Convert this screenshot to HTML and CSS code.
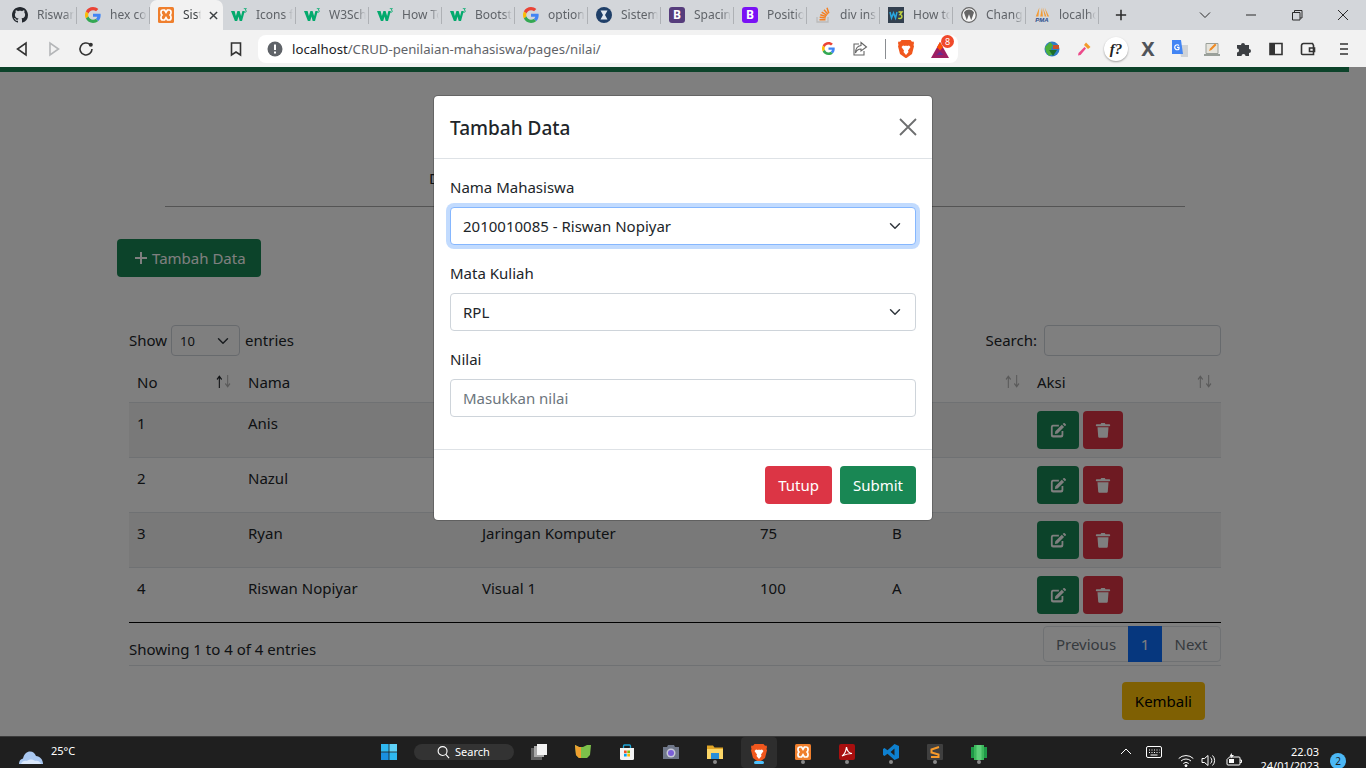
FILE: index.html
```html
<!DOCTYPE html>
<html>
<head>
  <title>Sistem Penilaian Mahasiswa</title>
  <meta charset="UTF-8">
  <meta name="viewport" content="width=device-width, initial-scale=1.0">
  <link rel="stylesheet" href="styles.css">
</head>
<body>
  <svg class="defs" width="0" height="0">
    <symbol id="i-github" viewBox="0 0 16 16"><path fill="#24292f" d="M8 0C3.58 0 0 3.58 0 8c0 3.54 2.29 6.53 5.47 7.59.4.07.55-.17.55-.38 0-.19-.01-.82-.01-1.49-2.01.37-2.53-.49-2.69-.94-.09-.23-.48-.94-.82-1.13-.28-.15-.68-.52-.01-.53.63-.01 1.08.58 1.23.82.72 1.21 1.87.87 2.33.66.07-.52.28-.87.51-1.07-1.78-.2-3.64-.89-3.64-3.95 0-.87.31-1.59.82-2.15-.08-.2-.36-1.02.08-2.12 0 0 .67-.21 2.2.82.64-.18 1.32-.27 2-.27.68 0 1.36.09 2 .27 1.53-1.04 2.2-.82 2.2-.82.44 1.1.16 1.92.08 2.12.51.56.82 1.27.82 2.15 0 3.07-1.87 3.75-3.65 3.95.29.25.54.73.54 1.48 0 1.07-.01 1.93-.01 2.2 0 .21.15.46.55.38A8.013 8.013 0 0016 8c0-4.42-3.58-8-8-8z"/></symbol>
    <symbol id="i-google" viewBox="0 0 48 48">
      <path fill="#EA4335" d="M24 9.5c3.54 0 6.71 1.22 9.21 3.6l6.85-6.85C35.9 2.38 30.47 0 24 0 14.62 0 6.51 5.38 2.56 13.22l7.98 6.19C12.43 13.72 17.74 9.5 24 9.5z"/>
      <path fill="#4285F4" d="M46.98 24.55c0-1.57-.15-3.09-.38-4.55H24v9.02h12.94c-.58 2.96-2.26 5.48-4.78 7.18l7.73 6c4.51-4.18 7.09-10.36 7.09-17.65z"/>
      <path fill="#FBBC05" d="M10.53 28.59c-.48-1.45-.76-2.99-.76-4.59s.27-3.14.76-4.59l-7.98-6.19C.92 16.46 0 20.12 0 24c0 3.88.92 7.54 2.56 10.78l7.97-6.19z"/>
      <path fill="#34A853" d="M24 48c6.48 0 11.93-2.13 15.89-5.81l-7.73-6c-2.15 1.45-4.92 2.3-8.16 2.3-6.26 0-11.57-4.22-13.47-9.91l-7.98 6.19C6.51 42.62 14.62 48 24 48z"/>
    </symbol>
    <symbol id="i-xampp" viewBox="0 0 16 16">
      <rect width="16" height="16" rx="1.5" fill="#ef7f2d"/>
      <path fill="none" stroke="#fff" stroke-width="1.7" d="M5 3h1.6L8 5.4 9.4 3H11a2 2 0 0 1 2 2v1a2 2 0 0 1-1.5 2A2 2 0 0 1 13 10v1a2 2 0 0 1-2 2H9.4L8 10.6 6.6 13H5a2 2 0 0 1-2-2v-1a2 2 0 0 1 1.5-2A2 2 0 0 1 3 6V5a2 2 0 0 1 2-2z"/>
    </symbol>
    <symbol id="i-w3" viewBox="0 0 16 14">
      <path fill="#04aa6d" d="M0 3h3.600l1.300 5 1.500-5h2.200l1.500 5 1.300-5h2.400L11 13H8.700L7.500 8.500 6.200 13H3.900z"/>
      <path fill="none" stroke="#04aa6d" stroke-width=".8" d="M12.800 .6h2.600l-1.300 1.400c1.700 0 1.700 2.300 0 2.300-.5 0-.9-.1-1.200-.4"/>
    </symbol>
    <symbol id="i-sistem" viewBox="0 0 16 16">
      <circle cx="8" cy="8" r="8" fill="#1f3f68"/>
      <path fill="#dfe6ee" d="M4.500 3.500h7L9 8l2.500 4.500h-7L7 8z"/>
    </symbol>
    <symbol id="i-so" viewBox="0 0 16 16">
      <path fill="none" stroke="#bcbbbb" stroke-width="1.300" d="M2 10v5h11v-5"/>
      <path fill="none" stroke="#f48024" stroke-width="1.500" d="M4.500 12.800h6M4.700 10.300l6 .6M5.300 7.800l5.800 1.700M6.700 5.200l5.200 3.100M9 2.800l3.900 4.400M12 .8l1.800 5.400"/>
    </symbol>
    <symbol id="i-w3d" viewBox="0 0 16 16">
      <rect width="16" height="16" fill="#33404f"/>
      <path fill="none" stroke="#29a8e0" stroke-width="1.500" d="M2 5l1.500 6L5.500 6l2 5L9 5"/>
      <path fill="none" stroke="#c4d640" stroke-width="1.400" d="M10.500 5H14l-2 2.500c2.600 0 2.600 4-.2 4-.6 0-1.100-.2-1.500-.6"/>
    </symbol>
    <symbol id="i-brave" viewBox="0 0 16 18">
      <path fill="#f1571d" d="M3.500 0h9l1.500 1.800 1.500-.2L16 3l-.5 2 .5 1.200-2 7.800L8.500 18h-1L2 14 0 6.200.5 5 0 3l.5-1.400 1.500.2z"/>
      <path fill="#fff" d="M5 5.500l2 .6 1-.6 1 .6 2-.6 1.500 1.500-2.500 3.500.5 1.500L8 15l-2.500-3 .5-1.500L3.500 7z"/>
    </symbol>
    <symbol id="i-edit" viewBox="0 0 18 18">
      <path fill="currentColor" d="M3 3h7v2H3.800a.8.8 0 0 0-.8.800v8.400c0 .4.400.8.800.8h8.400c.4 0 .8-.4.800-.8V10h2v5a2.500 2.500 0 0 1-2.500 2.500h-9A2.500 2.500 0 0 1 1 15V5.500A2.500 2.500 0 0 1 3 3z"/>
      <path fill="currentColor" d="M6 10.500L13.300 3.200l2.500 2.500L8.500 13 5.500 13.500zM14.200 2.300l1-1c.4-.4 1-.4 1.400 0l1.100 1.100c.4.4.4 1 0 1.400l-1 1z"/>
    </symbol>
    <symbol id="i-trash" viewBox="0 0 16 18">
      <path fill="currentColor" d="M1 2.500h4.200L6 1h4l.8 1.500H15a.7.7 0 0 1 0 2.200H1a.7.7 0 0 1 0-2.200zM1.800 5.800h12.400l-.8 10.400c0 .9-.8 1.600-1.600 1.600H4.200c-.8 0-1.600-.7-1.600-1.600z"/>
    </symbol>
    <symbol id="i-sort" viewBox="0 0 18 13" preserveAspectRatio="none">
      <path fill="none" stroke="var(--sort-up, currentColor)" stroke-width="1.300" d="M4 13V1.500M1.200 4.500L4 1.300l2.800 3.200"/>
      <path fill="none" stroke="currentColor" stroke-width="1.300" d="M14 0v11.500M11.200 8.500l2.800 3.200 2.800-3.200"/>
    </symbol>
  </svg>

  <div class="tabstrip">
    <div class="tab"><svg class="fav"><use href="#i-github"/></svg><span class="tab-title">Riswan</span></div>
    <div class="tab"><svg class="fav"><use href="#i-google"/></svg><span class="tab-title">hex color</span></div>
    <div class="tab tab-active"><svg class="fav"><use href="#i-xampp"/></svg><span class="tab-title">Sistem</span>
      <svg class="tab-close" viewBox="0 0 10 10"><path d="M1 1l8 8M9 1l-8 8"/></svg></div>
    <div class="tab"><svg class="fav"><use href="#i-w3"/></svg><span class="tab-title">Icons fr</span></div>
    <div class="tab"><svg class="fav"><use href="#i-w3"/></svg><span class="tab-title">W3Sch</span></div>
    <div class="tab"><svg class="fav"><use href="#i-w3"/></svg><span class="tab-title">How To</span></div>
    <div class="tab"><svg class="fav"><use href="#i-w3"/></svg><span class="tab-title">Bootstr</span></div>
    <div class="tab"><svg class="fav"><use href="#i-google"/></svg><span class="tab-title">option</span></div>
    <div class="tab"><svg class="fav"><use href="#i-sistem"/></svg><span class="tab-title">Sistem</span></div>
    <div class="tab"><span class="fav fav-b fav-b-dark">B</span><span class="tab-title">Spacing</span></div>
    <div class="tab"><span class="fav fav-b">B</span><span class="tab-title">Positio</span></div>
    <div class="tab"><svg class="fav"><use href="#i-so"/></svg><span class="tab-title">div insi</span></div>
    <div class="tab"><svg class="fav"><use href="#i-w3d"/></svg><span class="tab-title">How to</span></div>
    <div class="tab">
      <svg class="fav" viewBox="0 0 16 16"><circle cx="8" cy="8" r="7.300" fill="#f6f6f6" stroke="#666" stroke-width="1.300"/><path fill="#666" d="M3 5.500L5.800 13.300 8 7.300l2.200 6 2.800-7.800c-1-1.800-2.900-3-5-3s-4 1.200-5 3z"/></svg>
      <span class="tab-title">Change</span>
    </div>
    <div class="tab">
      <span class="fav fav-pma">
        <svg viewBox="0 0 18 10"><path fill="#f29b36" d="M6 0L2 10h3zM9 0L7 10h3zM10 0l2 10h2zM12 0l5 10h-2z"/></svg>
        <span class="pma-text">PMA</span>
      </span>
      <span class="tab-title">localho</span>
    </div>
    <svg class="new-tab" viewBox="0 0 14 14"><path d="M7 1v12M1 7h12"/></svg>
    <div class="window-controls">
      <svg viewBox="0 0 12 12"><path d="M1 3.500l5 5 5-5"/></svg>
      <svg viewBox="0 0 12 12"><path d="M1 6h10"/></svg>
      <svg viewBox="0 0 12 12"><path d="M1.500 3.500h7.500v7.500H1.500zM3.500 3.500V1.500H11V9H9"/></svg>
      <svg viewBox="0 0 12 12"><path d="M1 1l10 10M11 1L1 11"/></svg>
    </div>
  </div>

  <div class="toolbar">
    <div class="tool"><svg class="line" viewBox="0 0 16 16"><path d="M12 2v12L3.500 8z"/></svg></div>
    <div class="tool"><svg class="line line-off" viewBox="0 0 16 16"><path d="M4 2v12l8.500-6z"/></svg></div>
    <div class="tool"><svg class="line" viewBox="0 0 16 16"><path d="M14 8a6 6 0 1 1-1.900-4.400"/><circle class="dot" cx="12.800" cy="3.800" r="2"/></svg></div>
    <div class="tool tool-bookmark"><svg class="line" viewBox="0 0 16 16"><path d="M3.500 2h9v12L8 11l-4.500 3z"/></svg></div>
    <div class="address">
      <svg class="info" viewBox="0 0 16 16"><circle cx="8" cy="8" r="7.500"/><path d="M7 3.500h2v5.500H7zM7 10.500h2v2H7z"/></svg>
      <span class="url"><span class="url-host">localhost</span>/CRUD-penilaian-mahasiswa/pages/nilai/</span>
      <div class="address-right">
        <div class="tool"><svg class="icon13"><use href="#i-google"/></svg></div>
        <div class="tool"><svg class="line line-thin" viewBox="0 0 16 16"><path d="M7 3H2v11h10v-4M9 1.500l5.500 4.500L9 10V8C6 8 4.500 9.500 3.500 12c0-4 2-7 5.500-7.500z"/></svg></div>
        <span class="address-sep"></span>
        <div class="tool"><svg class="icon-brave"><use href="#i-brave"/></svg></div>
        <div class="tool tool-bat">
          <svg class="icon-bat" viewBox="0 0 18 16"><path fill="#9e1f63" d="M9 0l9 16H0z"/><path fill="#662d91" d="M9 9.500l3.700 3.500H5.300z"/><path fill="#ff5000" d="M9 0l3 5.300-3 3.200-3-3.200z"/></svg>
          <span class="bat-badge">8</span>
        </div>
      </div>
    </div>
    <div class="tool tool-ext-first">
      <svg class="icon16" viewBox="0 0 16 16"><circle cx="8" cy="8" r="7.500" fill="#2f7dc4"/><path fill="#4caf3c" d="M1 6l5-5 3 3-2 4 2 5-4 2-3-4z"/><path fill="#c9532b" d="M9 4h6v4H9z"/><path fill="#1b6e2b" d="M5 9h8l-4 6z"/></svg>
    </div>
    <div class="tool">
      <svg class="icon16" viewBox="0 0 16 16"><path fill="#f39a2b" d="M10 1.500l4.500 4.500-2.500 2L8 4z"/><path fill="#ec4a8a" d="M8.500 6l1.500 1.500L4.500 14 2 14.500 2.500 12z"/></svg>
    </div>
    <div class="tool"><span class="ext-fq">f?</span></div>
    <div class="tool"><span class="ext-x">X</span></div>
    <div class="tool">
      <svg class="icon-translate" viewBox="0 0 16 18"><path fill="#d0d3d7" d="M7 5h9v12H9z"/><path fill="#4285f4" d="M0 0h9l2 14H0z"/><path fill="none" stroke="#fff" stroke-width="1.200" d="M7 5.500A2.500 2.500 0 1 0 7 9V7.300H5"/></svg>
    </div>
    <div class="tool">
      <svg class="icon16" viewBox="0 0 16 16"><path fill="#e6e4dc" stroke="#9aa09a" d="M2 2.500h12v10H2z"/><path fill="#9aa09a" d="M0 13h16v2H0z"/><path fill="#f08a24" d="M5 10l1-2.500 5-5 1.500 1.500-5 5z"/></svg>
    </div>
    <div class="tool">
      <svg class="icon16" viewBox="0 0 16 16"><path fill="#3c3f43" d="M1 4h4a2 2 0 1 1 4 0h4v4a2 2 0 1 1 0 4v3H9.500a2 2 0 1 0-4 0H1v-3.500a2 2 0 1 0 0-4z"/></svg>
    </div>
    <div class="tool"><svg class="line" viewBox="0 0 16 16"><path d="M2 2.500h12v11H2z"/><path class="fill" d="M2 2.500h5v11H2z"/></svg></div>
    <div class="tool"><svg class="line" viewBox="0 0 16 16"><path d="M1.500 4.500a2 2 0 0 1 2-2h9l1 2v9h-11a1 1 0 0 1-1-1zM14.500 7h-5v3.500h5z"/></svg></div>
    <div class="tool tool-menu"><svg class="line" viewBox="0 0 16 16"><path d="M4 3h8M4 8h8M4 13h8"/></svg></div>
  </div>

  <div class="viewport">
    <div class="page">
      <div class="topbar"></div>
      <p class="page-title">Data Penilaian Mahasiswa</p>
      <hr class="title-line">
      <button class="btn btn-green btn-add">
        <svg class="plus" viewBox="0 0 14 14"><path d="M7 1v12M1 7h12"/></svg>Tambah Data
      </button>

      <div class="table-wrap">
        <div class="table-top">
          <label class="show">Show
            <select class="select select-sm"><option>10</option></select>
            entries</label>
          <label class="search">Search: <input class="input input-search" type="text"></label>
        </div>

        <table>
          <colgroup>
            <col class="col-no"><col class="col-nama"><col class="col-mk"><col class="col-nilai"><col class="col-grade"><col class="col-aksi">
          </colgroup>
          <thead>
            <tr>
              <th>No<svg class="sort sort-asc"><use href="#i-sort"/></svg></th>
              <th>Nama<svg class="sort"><use href="#i-sort"/></svg></th>
              <th>Mata Kuliah<svg class="sort"><use href="#i-sort"/></svg></th>
              <th>Nilai<svg class="sort"><use href="#i-sort"/></svg></th>
              <th>Mutu<svg class="sort"><use href="#i-sort"/></svg></th>
              <th>Aksi<svg class="sort"><use href="#i-sort"/></svg></th>
            </tr>
          </thead>
          <tbody>
            <tr class="odd">
              <td>1</td><td>Anis</td><td>RPL</td><td>80</td><td>A</td>
              <td><div class="actions"><a class="act act-edit"><svg><use href="#i-edit"/></svg></a><a class="act act-del"><svg><use href="#i-trash"/></svg></a></div></td>
            </tr>
            <tr>
              <td>2</td><td>Nazul</td><td>Basis Data</td><td>85</td><td>A</td>
              <td><div class="actions"><a class="act act-edit"><svg><use href="#i-edit"/></svg></a><a class="act act-del"><svg><use href="#i-trash"/></svg></a></div></td>
            </tr>
            <tr class="odd">
              <td>3</td><td>Ryan</td><td>Jaringan Komputer</td><td>75</td><td>B</td>
              <td><div class="actions"><a class="act act-edit"><svg><use href="#i-edit"/></svg></a><a class="act act-del"><svg><use href="#i-trash"/></svg></a></div></td>
            </tr>
            <tr>
              <td>4</td><td>Riswan Nopiyar</td><td>Visual 1</td><td>100</td><td>A</td>
              <td><div class="actions"><a class="act act-edit"><svg><use href="#i-edit"/></svg></a><a class="act act-del"><svg><use href="#i-trash"/></svg></a></div></td>
            </tr>
          </tbody>
        </table>

        <div class="table-bottom">
          <span class="info-text">Showing 1 to 4 of 4 entries</span>
          <div class="pagination">
            <a class="page-link page-prev">Previous</a>
            <a class="page-link page-on">1</a>
            <a class="page-link page-next">Next</a>
          </div>
        </div>
        <div class="back-row"><button class="btn btn-yellow">Kembali</button></div>
      </div>
    </div>

    <div class="backdrop"></div>

    <div class="modal">
      <div class="modal-header">
        <h5>Tambah Data</h5>
        <svg class="modal-close" viewBox="0 0 18 18"><path d="M1 1l16 16M17 1L1 17"/></svg>
      </div>
      <div class="modal-body">
        <label class="field-label">Nama Mahasiswa</label>
        <select class="select select-focus"><option>2010010085 - Riswan Nopiyar</option></select>
        <label class="field-label">Mata Kuliah</label>
        <select class="select"><option>RPL</option></select>
        <label class="field-label">Nilai</label>
        <input class="input" type="text" placeholder="Masukkan nilai">
      </div>
      <div class="modal-footer">
        <button class="btn btn-red">Tutup</button>
        <button class="btn btn-green">Submit</button>
      </div>
    </div>
  </div>

  <div class="taskbar">
    <div class="weather">
      <svg class="cloud" viewBox="0 0 24 14"><path fill="#a9c7f0" d="M0 14c0-3 1.500-5 4-5.500C5 4 8 1.500 11 1.500c3 0 5 2 6 4.500 4 .2 7 3.500 7 8z"/><path fill="#dbe8fa" d="M2 14c1-3 4-4 6-3 2-2 6-2 8 0 2-1 5 0 6 3z"/></svg>
      <span>25°C</span>
    </div>
    <div class="task-center">
      <div class="task-slot">
        <svg class="task-icon" viewBox="0 0 16 16"><path fill="#2fb8f0" d="M0 0h7.600v7.600H0z"/><path fill="#5fd2f8" d="M8.400 0H16v7.600H8.400z"/><path fill="#1a8fe0" d="M0 8.400h7.600V16H0z"/><path fill="#2fb8f0" d="M8.400 8.400H16V16H8.400z"/></svg>
      </div>
      <div class="task-search">
        <svg viewBox="0 0 14 14"><circle cx="6" cy="6" r="4.800"/><path d="M9.500 9.500L13 13.500"/></svg>
        <span>Search</span>
      </div>
      <div class="task-slot">
        <svg class="task-icon" viewBox="0 0 16 16"><path fill="#5f5f5f" d="M0 4h11v12H0z"/><path fill="#a8a8a8" d="M3 2h10v11H3z"/><path fill="#f2f2f2" d="M6 0h10v11H6z"/></svg>
      </div>
      <div class="task-slot">
        <svg class="task-icon" viewBox="0 0 16 16"><path fill="#7cc04a" d="M0 1l4 2h4l4-2 4 0-1 10-3 3H4l-3-3z"/><path fill="#f0a030" d="M0 1l4 2h2v11H4l-3-3z"/></svg>
      </div>
      <div class="task-slot">
        <svg class="task-icon" viewBox="0 0 16 16"><path fill="#f4f4f4" d="M1 4h14v10.500a1.500 1.500 0 0 1-1.500 1.500h-11A1.500 1.500 0 0 1 1 14.500z"/><path fill="none" stroke="#1da5d8" stroke-width="1.300" d="M4.500 4V2a1 1 0 0 1 1-1h5a1 1 0 0 1 1 1v2"/><path fill="#f25022" d="M5 6.500h2.700v2.700H5z"/><path fill="#7fba00" d="M8.300 6.500H11v2.700H8.300z"/><path fill="#00a4ef" d="M5 9.800h2.700v2.700H5z"/><path fill="#ffb900" d="M8.300 9.800H11v2.700H8.300z"/></svg>
      </div>
      <div class="task-slot">
        <svg class="task-icon" viewBox="0 0 16 16"><path fill="#70788a" d="M0 3h4l1-2h6l1 2h4v12H0z"/><circle cx="8" cy="9" r="4.500" fill="#c7c9d8"/><circle cx="8" cy="9" r="3" fill="#7a5fd8"/></svg>
      </div>
      <div class="task-slot task-run">
        <svg class="task-icon" viewBox="0 0 16 16"><path fill="#e0a526" d="M0 1.500h6l1.500 2H16v11H0z"/><path fill="#fcd667" d="M0 5h16v10H0z"/><path fill="#2a8fd8" d="M4 9h8v6H4z"/></svg>
      </div>
      <div class="task-slot task-active">
        <svg class="task-icon task-brave"><use href="#i-brave"/></svg>
      </div>
      <div class="task-slot task-run"><svg class="task-icon"><use href="#i-xampp"/></svg></div>
      <div class="task-slot task-run">
        <svg class="task-icon" viewBox="0 0 16 16"><rect width="16" height="16" rx="2" fill="#a80f0f"/><path fill="none" stroke="#fff" stroke-width="1.200" d="M3 12c3-2 4-5 4.500-9 .5 4 2 6 5.500 6.500-4 0-7 1-10 2.500z"/></svg>
      </div>
      <div class="task-slot task-run">
        <svg class="task-icon" viewBox="0 0 16 16"><path fill="#0e80cf" d="M11.500 0L16 2v12l-4.500 2-7-6.300L1.500 12 0 11V5l1.500-1 3 2.300zM11.500 4.500L7.500 8l4 3.500z"/></svg>
      </div>
      <div class="task-slot task-run">
        <svg class="task-icon" viewBox="0 0 16 16"><rect width="16" height="16" rx="1" fill="#3f3f3f"/><path fill="none" stroke="#f79a2a" stroke-width="2" d="M12 3L4.500 5.500v3l7 2v2.500L4 13"/></svg>
      </div>
      <div class="task-slot task-run">
        <svg class="task-icon" viewBox="0 0 16 16"><path fill="#1f9a48" d="M0 3h16v11H0z"/><path fill="#3cb85c" d="M3 1h10v15H3z"/><path fill="#5fd07a" d="M5.500 1h5v15h-5z"/></svg>
      </div>
    </div>
    <div class="tray">
      <svg class="tray-up" viewBox="0 0 12 7"><path d="M1 6l5-5 5 5"/></svg>
      <svg class="tray-kb" viewBox="0 0 16 12"><rect x=".5" y=".5" width="15" height="11" rx="1.500"/><path d="M3 4h1M5.500 4h1M8 4h1M10.500 4h1M13 4h.5M3 6.500h1M5.500 6.500h1M8 6.500h1M10.500 6.500h1M13 6.500h.5M4.500 9h7"/></svg>
      <svg class="tray-wifi" viewBox="0 0 16 13"><path d="M.7 4.500a10.500 10.500 0 0 1 14.600 0M3 7a7.200 7.200 0 0 1 10 0M5.300 9.500a3.900 3.900 0 0 1 5.400 0"/><circle cx="8" cy="11.700" r="1" fill="#fff"/></svg>
      <svg class="tray-vol" viewBox="0 0 16 13"><path d="M1 4.500h2.500L7 1.500v10l-3.500-3H1zM9.500 3.500a4 4 0 0 1 0 6M11.500 1.500a7 7 0 0 1 0 10"/></svg>
      <svg class="tray-bat" viewBox="0 0 16 14"><path d="M3.500 4h9.500a1 1 0 0 1 1 1v6a1 1 0 0 1-1 1H2a1 1 0 0 1-1-1V6.500zM14 7h1.500v2.500H14"/><path class="fill" d="M3 6h5v4H3z"/><path class="fill" d="M5.500 0L3.500 3.500h2l-.5 2L8 2H6z"/></svg>
      <div class="clock"><span>22.03</span><span>24/01/2023</span></div>
      <span class="notif">2</span>
    </div>
  </div>
</body>
</html>
```

FILE: styles.css
```css
* {
  box-sizing: border-box;
}

html, body {
  height: 100%;
}

body {
  margin: 0;
  overflow: hidden;
  display: flex;
  flex-direction: column;
  font-family: 'Noto Sans', sans-serif;
  font-size: 15px;
  line-height: 24px;
  color: #212529;
  background: #fff;
}

.defs {
  position: absolute;
}

/* browser tabs */
.tabstrip {
  height: 30px;
  flex: none;
  display: flex;
  align-items: center;
  padding-left: 4px;
  background: #d3d6da;
}

.tab {
  width: 73px;
  height: 30px;
  flex: none;
  display: flex;
  align-items: center;
  padding-left: 8px;
  position: relative;
}

.tab::after {
  content: "";
  position: absolute;
  right: 0;
  top: 7px;
  height: 17px;
  border-right: 1px solid #aeb1b5;
}

.tab-active {
  background: #f2f2f2;
  border-radius: 7px 7px 0 0;
}

.tab-active::after {
  display: none;
}

.fav {
  width: 16px;
  height: 16px;
  flex: none;
}

.fav-b {
  background: #7a12f5;
  color: #fff;
  border-radius: 3px;
  font-size: 12px;
  font-weight: 700;
  line-height: 16px;
  text-align: center;
}

.fav-b-dark {
  background: #563d7c;
}

.fav-pma {
  display: flex;
  flex-direction: column;
  align-items: center;
}

.fav-pma svg {
  width: 16px;
  height: 10px;
  flex: none;
}

.pma-text {
  font-family: 'Liberation Sans', sans-serif;
  font-size: 6px;
  font-style: italic;
  font-weight: 700;
  line-height: 6px;
  color: #2b4c8c;
}

.tab-title {
  margin-left: 9px;
  width: 37px;
  flex: none;
  overflow: hidden;
  white-space: nowrap;
  font-size: 12px;
  color: #5f6368;
  -webkit-mask-image: linear-gradient(to right, #000 75%, transparent);
  mask-image: linear-gradient(to right, #000 75%, transparent);
}

.tab-active .tab-title {
  width: 18px;
  color: #3c4043;
}

.tab-close {
  width: 9px;
  height: 9px;
  margin-left: 8px;
  fill: none;
  stroke: #3c4043;
  stroke-width: 1.600;
}

.new-tab {
  width: 12px;
  height: 12px;
  margin-left: 16px;
  fill: none;
  stroke: #2b2b2b;
  stroke-width: 1.800;
}

.window-controls {
  margin-left: auto;
  display: flex;
  gap: 34px;
  padding-right: 17px;
}

.window-controls svg {
  width: 12px;
  height: 12px;
  fill: none;
  stroke: #2b2b2b;
  stroke-width: 1;
}

/* browser toolbar */
.toolbar {
  height: 37px;
  flex: none;
  display: flex;
  align-items: center;
  padding-left: 6px;
  background: #f2f2f2;
}

.tool {
  width: 32px;
  height: 28px;
  flex: none;
  display: flex;
  align-items: center;
  justify-content: center;
  position: relative;
}

.line {
  width: 16px;
  height: 16px;
  fill: none;
  stroke: #333;
  stroke-width: 1.600;
}

.line-off {
  stroke: #b4b6b8;
}

.line-thin {
  stroke: #666;
  stroke-width: 1.100;
}

.line .dot, .line .fill {
  fill: #333;
  stroke: none;
}

.icon16 {
  width: 16px;
  height: 16px;
}

.icon13 {
  width: 13px;
  height: 13px;
}

.icon-translate {
  width: 16px;
  height: 18px;
}

.tool-bookmark {
  margin-left: 118px;
}

.address {
  width: 700px;
  height: 28px;
  margin-left: 6px;
  flex: none;
  display: flex;
  align-items: center;
  padding-left: 9px;
  background: #fff;
  border-radius: 8px;
}

.info {
  width: 16px;
  height: 16px;
  flex: none;
}

.info circle {
  fill: #5f6368;
}

.info path {
  fill: #fff;
}

.url {
  margin-left: 9px;
  font-size: 13.200px;
  color: #5f6368;
  white-space: nowrap;
}

.url-host {
  color: #202124;
}

.address-right {
  margin-left: auto;
  display: flex;
  align-items: center;
  padding-right: 2px;
}

.address-sep {
  height: 20px;
  margin: 0 4px 0 9px;
  border-left: 1px solid #8a8d91;
}

.icon-brave {
  width: 16px;
  height: 18px;
}

.tool-bat {
  margin-left: 2px;
}

.icon-bat {
  width: 18px;
  height: 16px;
  margin-top: 2px;
}

.bat-badge {
  position: absolute;
  right: 2px;
  top: 0;
  width: 13px;
  height: 13px;
  border-radius: 50%;
  background: #f0492b;
  color: #fff;
  font-size: 9px;
  line-height: 13px;
  text-align: center;
}

.tool-ext-first {
  margin-left: 78px;
}

.ext-fq {
  width: 24px;
  height: 24px;
  border-radius: 50%;
  background: #fff;
  box-shadow: 0 1px 2px rgba(0,0,0,.35);
  font-family: 'Liberation Serif', serif;
  font-style: italic;
  font-weight: 700;
  font-size: 15px;
  line-height: 24px;
  text-align: center;
  color: #222;
}

.ext-x {
  font-size: 20px;
  font-weight: 700;
  color: #50545a;
}

.tool-menu {
  margin-left: 4px;
}

/* page area */
.viewport {
  height: 669px;
  flex: none;
  position: relative;
  overflow: hidden;
}

.page {
  width: 1349px;
}

.topbar {
  height: 5px;
  background: #198754;
}

.page-title {
  margin: 94px 0 0;
  padding-left: 429px;
  white-space: nowrap;
}

.title-line {
  width: 1020px;
  margin: 16px 0 0 165px;
  border: 0;
  border-top: 1px solid #a8a8a8;
}

.btn {
  height: 38px;
  padding: 0 12px;
  border: 1px solid transparent;
  border-radius: 4px;
  font-family: inherit;
  font-size: 15px;
  color: #fff;
}

.btn-green {
  background: #198754;
}

.btn-red {
  background: #dc3545;
}

.btn-yellow {
  background: #ffc107;
  color: #000;
}

.btn-add {
  display: flex;
  align-items: center;
  width: 144px;
  margin: 32px 0 0 117px;
  padding: 0 0 0 16px;
  white-space: nowrap;
}

.plus {
  width: 14px;
  height: 14px;
  margin-right: 4px;
  fill: none;
  stroke: #fff;
  stroke-width: 2;
}

.table-wrap {
  width: 1092px;
  margin: 48px 0 0 129px;
}

.table-top {
  display: flex;
  justify-content: space-between;
  height: 31px;
  margin-bottom: 6px;
}

.show, .search {
  display: flex;
  align-items: flex-start;
  gap: 4px;
  line-height: 30px;
}

.search {
  gap: 7px;
}

.select, .input {
  display: block;
  width: 100%;
  height: 38px;
  padding: 0 12px;
  border: 1px solid #ced4da;
  border-radius: 4px;
  background-color: #fff;
  font-family: inherit;
  font-size: 15px;
  color: #212529;
}

.select {
  appearance: none;
  -webkit-appearance: none;
  background-image: url("data:image/svg+xml,%3csvg xmlns='http://www.w3.org/2000/svg' viewBox='0 0 16 16'%3e%3cpath fill='none' stroke='%23343a40' stroke-linecap='round' stroke-linejoin='round' stroke-width='2' d='M2 5l6 6 6-6'/%3e%3c/svg%3e");
  background-repeat: no-repeat;
  background-position: right 12px center;
  background-size: 16px 12px;
}

.select-sm {
  width: 69px;
  height: 31px;
  margin-right: 1px;
  padding-left: 8px;
  font-size: 13px;
  background-position: right 8px center;
}

.select-focus {
  border-color: #86b7fe;
  box-shadow: 0 0 0 4px rgba(13,110,253,.25);
}

.input::placeholder {
  color: #6c757d;
}

.input-search {
  width: 177px;
  height: 31px;
}

table {
  width: 1092px;
  table-layout: fixed;
  border-collapse: collapse;
}

.col-no { width: 111px; }
.col-nama { width: 234px; }
.col-mk { width: 278px; }
.col-nilai { width: 132px; }
.col-grade { width: 145px; }

th, td {
  padding: 8px;
  text-align: left;
  vertical-align: top;
  font-weight: 400;
  border-bottom: 1px solid #dee2e6;
}

th {
  position: relative;
  height: 40px;
}

tbody tr:last-child td {
  border-bottom: 1px solid #000;
}

.odd td {
  background: rgba(0,0,0,.05);
}

.sort {
  position: absolute;
  right: 9px;
  top: 13px;
  width: 15px;
  height: 13px;
  color: #b5b5b5;
}

.sort-asc {
  --sort-up: #212529;
}

.actions {
  display: flex;
  gap: 4px;
}

.act {
  height: 38px;
  border-radius: 4px;
  display: flex;
  align-items: center;
  justify-content: center;
  color: #fff;
}

.act-edit {
  width: 42px;
  background: #198754;
}

.act-del {
  width: 40px;
  background: #dc3545;
}

.act svg {
  width: 16px;
  height: 16px;
}

.table-bottom {
  display: flex;
  justify-content: space-between;
  height: 43px;
  padding-top: 3px;
  border-bottom: 1px solid #dee2e6;
}

.info-text {
  padding-top: 11px;
}

.pagination {
  display: flex;
  height: 36px;
  border: 1px solid #dee2e6;
  border-radius: 4px;
}

.page-link {
  line-height: 34px;
  text-align: center;
  color: #6c757d;
}

.page-prev {
  width: 84px;
}

.page-next {
  width: 58px;
}

.page-on {
  width: 34px;
  height: 36px;
  margin-top: -1px;
  background: #0d6efd;
  color: #fff;
  line-height: 36px;
}

.back-row {
  display: flex;
  justify-content: flex-end;
  padding: 16px 16px 0 0;
}

.backdrop {
  position: absolute;
  inset: 0;
  background: rgba(0,0,0,.5);
}

.modal {
  position: absolute;
  left: 433px;
  top: 28px;
  width: 500px;
  background: #fff;
  border: 1px solid rgba(0,0,0,.2);
  background-clip: padding-box;
  border-radius: 5px;
}

.modal-header {
  display: flex;
  justify-content: space-between;
  align-items: center;
  height: 63px;
  padding: 2px 15px 0 16px;
  border-bottom: 1px solid #dee2e6;
}

.modal-header h5 {
  margin: 0;
  font-size: 19px;
  font-weight: 500;
  line-height: 30px;
}

.modal-close {
  width: 18px;
  height: 18px;
  margin-top: -2px;
  fill: none;
  stroke: #6d6e6f;
  stroke-width: 1.800;
}

.modal-body {
  padding: 16px 16px 32px;
}

.field-label {
  display: block;
  margin-bottom: 8px;
}

.modal-body .select {
  margin-bottom: 16px;
}

.modal-footer {
  display: flex;
  justify-content: flex-end;
  gap: 8px;
  padding: 16px;
  border-top: 1px solid #dee2e6;
}

/* windows taskbar */
.taskbar {
  flex: 1;
  min-height: 0;
  display: flex;
  overflow: hidden;
  background: #1f1f1f;
  border-top: 1px solid #3a3a3a;
  color: #fff;
  font-size: 11px;
  line-height: 14px;
}

.weather {
  width: 367px;
  flex: none;
  display: flex;
  align-items: flex-start;
  padding: 7px 0 0 19px;
}

.cloud {
  width: 24px;
  height: 14px;
  margin: 6px 8px 0 0;
}

.task-center {
  display: flex;
  width: 734px;
  flex: none;
}

.task-slot {
  width: 44px;
  height: 31px;
  flex: none;
  display: flex;
  justify-content: center;
  padding-top: 7px;
  position: relative;
}

.task-icon {
  width: 16px;
  height: 16px;
}

.task-brave {
  height: 18px;
}

.task-run::after {
  content: "";
  position: absolute;
  left: 20px;
  top: 23px;
  width: 4px;
  height: 4px;
  border-radius: 50%;
  background: #8a8a8a;
}

.task-active {
  background: #2e2e2e;
  border-radius: 4px;
  width: 36px;
  margin: 0 4px;
}

.task-active::after {
  content: "";
  position: absolute;
  left: 13px;
  top: 24px;
  width: 10px;
  height: 3px;
  border-radius: 2px;
  background: #4cc2ff;
}

.task-search {
  width: 100px;
  height: 16px;
  flex: none;
  margin: 7px 3px 0;
  padding-left: 23px;
  display: flex;
  align-items: center;
  gap: 5px;
  background: #333;
  border-radius: 8px;
}

.task-search svg {
  width: 13px;
  height: 14px;
  fill: none;
  stroke: #fff;
  stroke-width: 1.200;
}

.tray {
  display: flex;
  align-items: flex-start;
  padding-left: 19px;
}

.tray svg {
  fill: none;
  stroke: #fff;
  stroke-width: 1;
  flex: none;
}

.tray .fill {
  fill: #fff;
  stroke: none;
}

.tray-up {
  width: 12px;
  height: 7px;
  margin-top: 11px;
}

.tray-kb {
  width: 16px;
  height: 12px;
  margin: 9px 0 0 14px;
}

.tray-wifi {
  width: 16px;
  height: 13px;
  margin: 17px 0 0 16px;
}

.tray-vol {
  width: 16px;
  height: 13px;
  margin: 17px 0 0 7px;
}

.tray-bat {
  width: 16px;
  height: 14px;
  margin: 16px 0 0 9px;
}

.clock {
  width: 77px;
  padding-top: 8px;
  display: flex;
  flex-direction: column;
  align-items: flex-end;
}

.notif {
  width: 16px;
  height: 16px;
  margin: 16px 0 0 11px;
  border-radius: 50%;
  background: #4cb8f5;
  color: #1f1f1f;
  font-size: 10px;
  line-height: 16px;
  text-align: center;
}
```
